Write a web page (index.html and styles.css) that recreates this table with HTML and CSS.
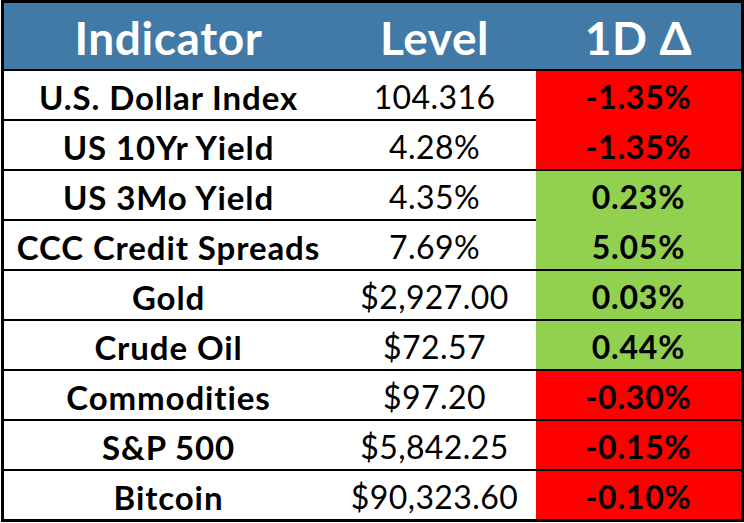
FILE: index.html
```html
<!DOCTYPE html>
<html>
<head>
<meta charset="utf-8">
<link rel="stylesheet" href="styles.css">
</head>
<body>
<div class="table">
  <div class="cell head">Indicator</div>
  <div class="cell head">Level</div>
  <div class="cell head">1D Δ</div>

  <div class="cell name">U.S. Dollar Index</div>
  <div class="cell level">104.316</div>
  <div class="cell chg red noline">-1.35%</div>

  <div class="cell name">US 10Yr Yield</div>
  <div class="cell level">4.28%</div>
  <div class="cell chg red">-1.35%</div>

  <div class="cell name">US 3Mo Yield</div>
  <div class="cell level">4.35%</div>
  <div class="cell chg green noline">0.23%</div>

  <div class="cell name">CCC Credit Spreads</div>
  <div class="cell level">7.69%</div>
  <div class="cell chg green">5.05%</div>

  <div class="cell name">Gold</div>
  <div class="cell level">$2,927.00</div>
  <div class="cell chg green">0.03%</div>

  <div class="cell name">Crude Oil</div>
  <div class="cell level">$72.57</div>
  <div class="cell chg green">0.44%</div>

  <div class="cell name">Commodities</div>
  <div class="cell level">$97.20</div>
  <div class="cell chg red">-0.30%</div>

  <div class="cell name">S&amp;P 500</div>
  <div class="cell level">$5,842.25</div>
  <div class="cell chg red">-0.15%</div>

  <div class="cell name last">Bitcoin</div>
  <div class="cell level last">$90,323.60</div>
  <div class="cell chg red last">-0.10%</div>
</div>
</body>
</html>
```

FILE: styles.css
```css
html, body {
  margin: 0;
  padding: 0;
  background: #ffffff;
}

.table {
  box-sizing: border-box;
  margin-left: 1px;
  width: 743px;
  height: 522px;
  border: 3px solid #000000;
  display: grid;
  grid-template-columns: 329px 203px 205px;
  grid-template-rows: 68px repeat(8, 50px) 48px;
  font-family: Lato, "Open Sans", sans-serif;
  color: #000000;
}

.cell {
  box-sizing: border-box;
  display: flex;
  align-items: center;
  justify-content: center;
  border-bottom: 2px solid #000000;
  white-space: nowrap;
  padding-top: 3px;
}

.head {
  background: #417aa6;
  color: #ffffff;
  font-weight: 700;
  font-size: 46px;
  letter-spacing: 0.6px;
  padding-top: 2px;
}

.name {
  font-weight: 700;
  font-size: 33px;
  letter-spacing: 0.9px;
}

.level {
  font-weight: 400;
  font-size: 32px;
  letter-spacing: 0.4px;
}

.chg {
  font-weight: 700;
  font-size: 32px;
  letter-spacing: 0.8px;
}

.red {
  background: #ff0000;
}

.green {
  background: #92d050;
}

.red.noline {
  border-bottom-color: #ff0000;
}

.green.noline {
  border-bottom-color: #92d050;
}

.last {
  border-bottom: none;
}
```
